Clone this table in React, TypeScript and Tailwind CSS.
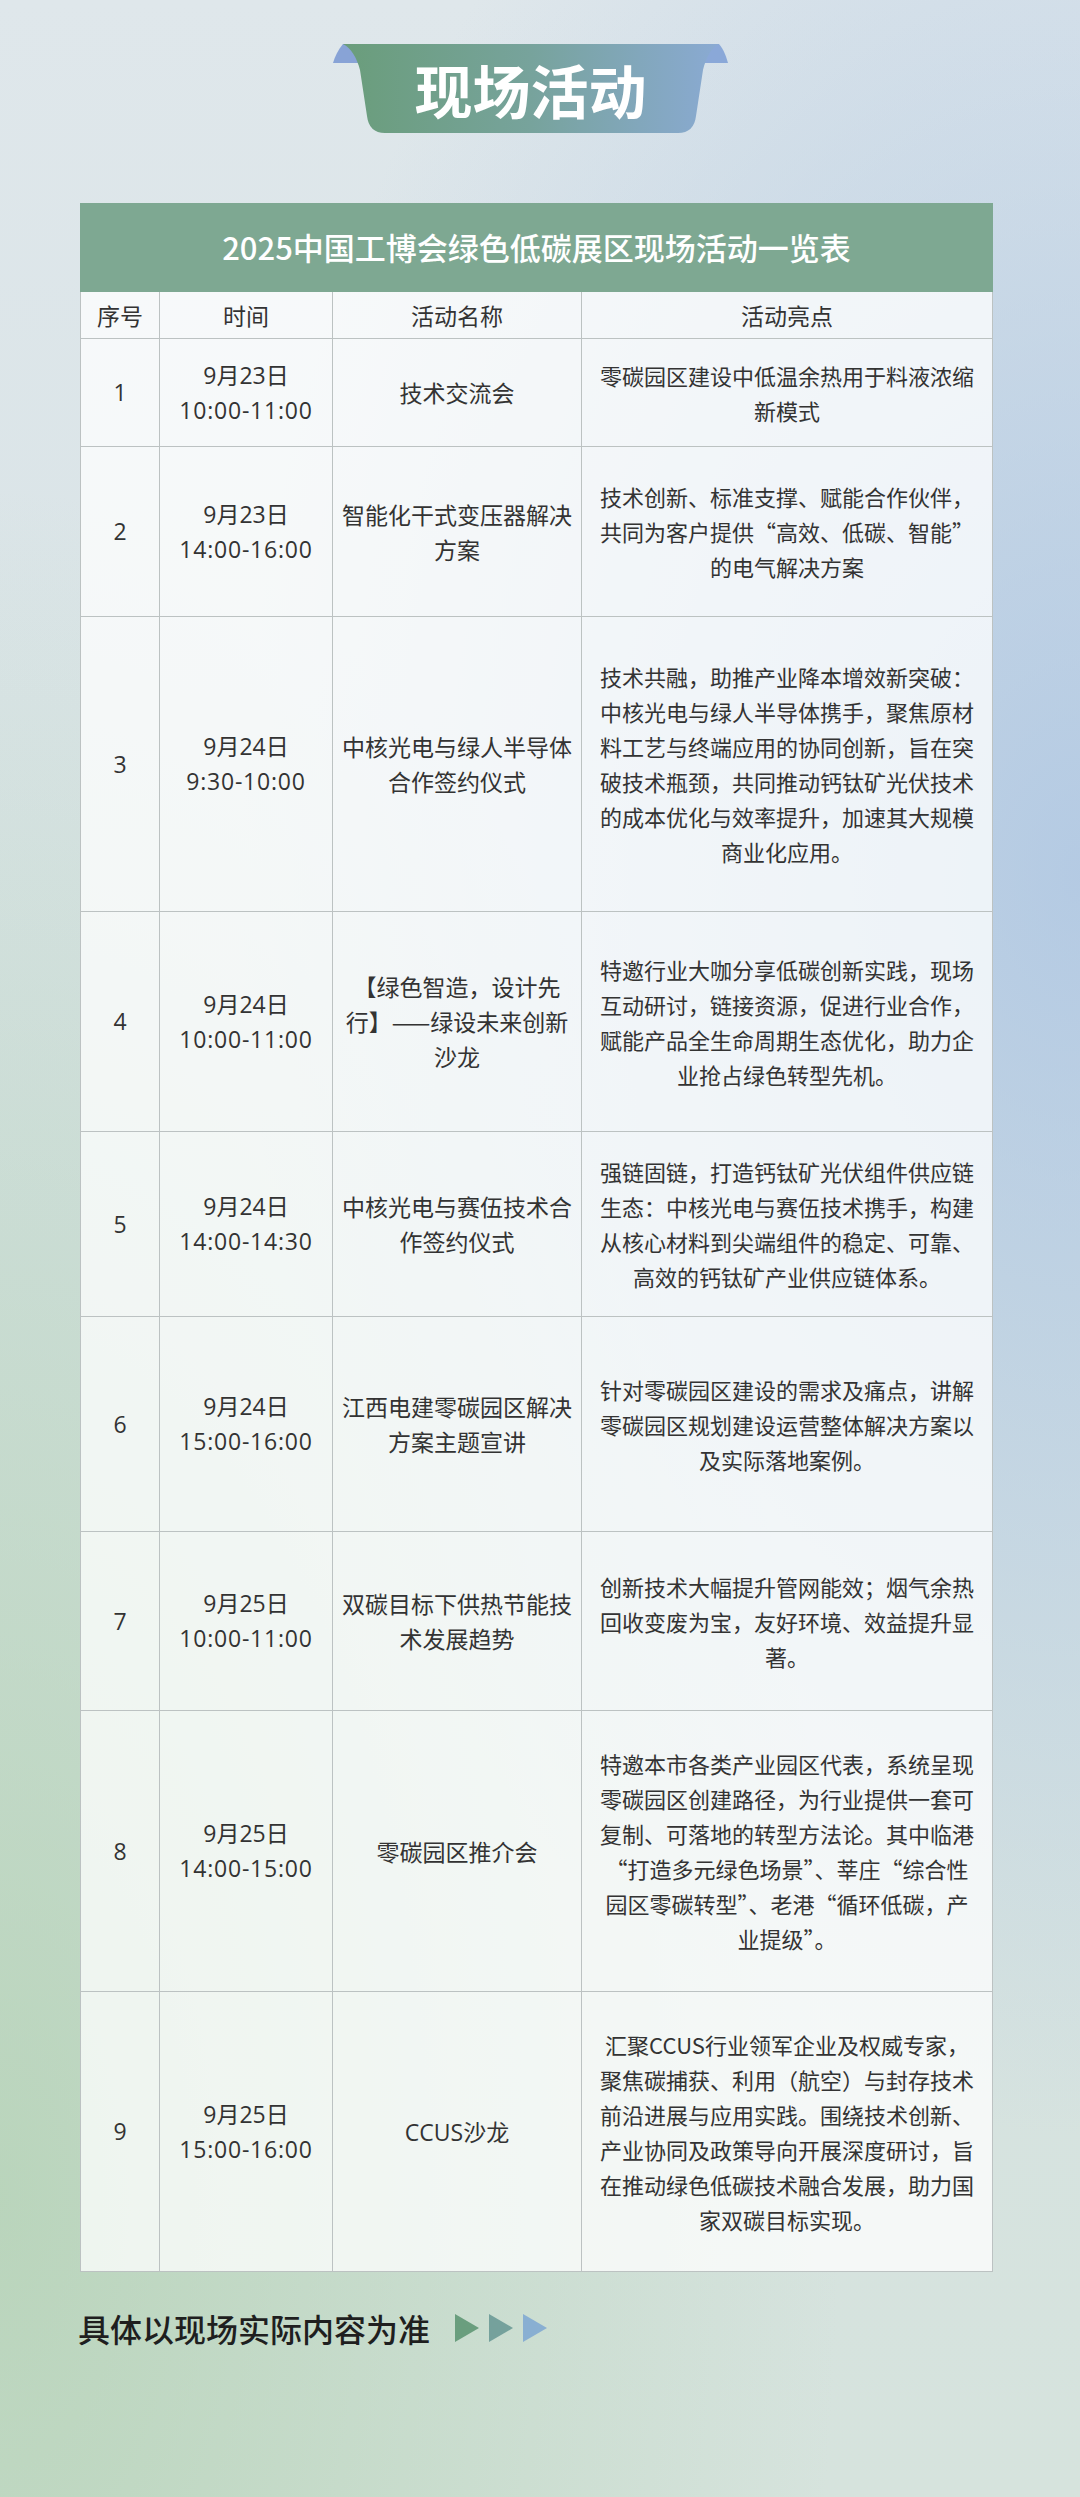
import React from "react";

type Row = {
  no: string;
  date: string;
  time: string;
  name: string[];
  points: string[];
  h: string;
};

const rows: Row[] = [
  {
    no: "1",
    date: "9月23日",
    time: "10:00-11:00",
    name: ["技术交流会"],
    points: ["零碳园区建设中低温余热用于料液浓缩", "新模式"],
    h: "h-[108px]",
  },
  {
    no: "2",
    date: "9月23日",
    time: "14:00-16:00",
    name: ["智能化干式变压器解决", "方案"],
    points: [
      "技术创新、标准支撑、赋能合作伙伴，",
      "共同为客户提供“高效、低碳、智能”",
      "的电气解决方案",
    ],
    h: "h-[170px]",
  },
  {
    no: "3",
    date: "9月24日",
    time: "9:30-10:00",
    name: ["中核光电与绿人半导体", "合作签约仪式"],
    points: [
      "技术共融，助推产业降本增效新突破：",
      "中核光电与绿人半导体携手，聚焦原材",
      "料工艺与终端应用的协同创新，旨在突",
      "破技术瓶颈，共同推动钙钛矿光伏技术",
      "的成本优化与效率提升，加速其大规模",
      "商业化应用。",
    ],
    h: "h-[295px]",
  },
  {
    no: "4",
    date: "9月24日",
    time: "10:00-11:00",
    name: ["【绿色智造，设计先", "行】——绿设未来创新", "沙龙"],
    points: [
      "特邀行业大咖分享低碳创新实践，现场",
      "互动研讨，链接资源，促进行业合作，",
      "赋能产品全生命周期生态优化，助力企",
      "业抢占绿色转型先机。",
    ],
    h: "h-[220px]",
  },
  {
    no: "5",
    date: "9月24日",
    time: "14:00-14:30",
    name: ["中核光电与赛伍技术合", "作签约仪式"],
    points: [
      "强链固链，打造钙钛矿光伏组件供应链",
      "生态：中核光电与赛伍技术携手，构建",
      "从核心材料到尖端组件的稳定、可靠、",
      "高效的钙钛矿产业供应链体系。",
    ],
    h: "h-[185px]",
  },
  {
    no: "6",
    date: "9月24日",
    time: "15:00-16:00",
    name: ["江西电建零碳园区解决", "方案主题宣讲"],
    points: [
      "针对零碳园区建设的需求及痛点，讲解",
      "零碳园区规划建设运营整体解决方案以",
      "及实际落地案例。",
    ],
    h: "h-[215px]",
  },
  {
    no: "7",
    date: "9月25日",
    time: "10:00-11:00",
    name: ["双碳目标下供热节能技", "术发展趋势"],
    points: [
      "创新技术大幅提升管网能效；烟气余热",
      "回收变废为宝，友好环境、效益提升显",
      "著。",
    ],
    h: "h-[179px]",
  },
  {
    no: "8",
    date: "9月25日",
    time: "14:00-15:00",
    name: ["零碳园区推介会"],
    points: [
      "特邀本市各类产业园区代表，系统呈现",
      "零碳园区创建路径，为行业提供一套可",
      "复制、可落地的转型方法论。其中临港",
      "“打造多元绿色场景”、莘庄“综合性",
      "园区零碳转型”、老港“循环低碳，产",
      "业提级”。",
    ],
    h: "h-[281px]",
  },
  {
    no: "9",
    date: "9月25日",
    time: "15:00-16:00",
    name: ["CCUS沙龙"],
    points: [
      "汇聚CCUS行业领军企业及权威专家，",
      "聚焦碳捕获、利用（航空）与封存技术",
      "前沿进展与应用实践。围绕技术创新、",
      "产业协同及政策导向开展深度研讨，旨",
      "在推动绿色低碳技术融合发展，助力国",
      "家双碳目标实现。",
    ],
    h: "h-[280px]",
  },
];

const cols = "grid grid-cols-[78px_173px_249px_411px]";
const cell = "flex flex-col items-center justify-center text-center";
const latin = "font-['Open_Sans','Noto_Sans_CJK_SC',sans-serif]";

const Banner = () => (
  <div className="relative ml-[333px] flex h-[89px] w-[395px] items-center justify-center">
    <svg
      className="absolute inset-0"
      width="395"
      height="89"
      viewBox="0 0 395 89"
    >
      <defs>
        <linearGradient id="bannerFill" x1="0" y1="0" x2="1" y2="0">
          <stop offset="0" stopColor="#6a9d7b" />
          <stop offset="0.5" stopColor="#77a39c" />
          <stop offset="1" stopColor="#8aaad3" />
        </linearGradient>
      </defs>
      <path d="M10 0 C5 6 2 12 0 19 L28 19 L28 0 Z" fill="#88a3d6" />
      <path d="M386 0 C391 6 393 12 395 19 L367 19 L367 0 Z" fill="#8aa8d8" />
      <path
        d="M10 0 L386 0 C378 4 373 14 370 26 L363 72 Q361 89 345 89 L52 89 Q36 89 34 72 L27 26 C24 14 18 4 10 0 Z"
        fill="url(#bannerFill)"
      />
    </svg>
    <span className="relative text-[58px] font-bold leading-none text-white">
      现场活动
    </span>
  </div>
);

const Arrow = ({ color }: { color: string }) => (
  <svg width="24" height="28" viewBox="0 0 24 28">
    <polygon points="0,0 24,14 0,28" fill={color} />
  </svg>
);

export default function App() {
  return (
    <div className="relative h-[2497px] w-[1080px] overflow-hidden bg-[radial-gradient(ellipse_at_100%_35%,rgba(168,194,226,0.75),transparent_55%),radial-gradient(ellipse_at_0%_88%,rgba(176,208,176,0.75),transparent_55%),linear-gradient(180deg,#dfe7eb,#d6e2e4_50%,#d6e3dd)] font-['Noto_Sans_CJK_SC','Noto_Sans',sans-serif] text-[#333]">
      <div className="pt-[44px]">
        <Banner />
      </div>

      <div className="ml-[80px] mt-[70px] w-[913px]">
        <div className="flex h-[89px] items-center justify-center bg-[#7ea892] text-[31px] font-medium text-white">
          2025中国工博会绿色低碳展区现场活动一览表
        </div>

        <div className="border-x border-b border-[#bcc2c2] bg-white/75">
          <div className={`${cols} h-[46px] text-[23px]`}>
            <div className={cell}>序号</div>
            <div className={`${cell} border-l border-[#bcc2c2]`}>时间</div>
            <div className={`${cell} border-l border-[#bcc2c2]`}>活动名称</div>
            <div className={`${cell} border-l border-[#bcc2c2]`}>活动亮点</div>
          </div>

          {rows.map((r) => (
            <div
              key={r.no}
              className={`${cols} ${r.h} border-t border-[#bcc2c2] leading-[35px]`}
            >
              <div className={`${cell} ${latin} text-[23px]`}>{r.no}</div>
              <div
                className={`${cell} ${latin} border-l border-[#bcc2c2] text-[23px]`}
              >
                <span>{r.date}</span>
                <span className="tracking-[0.8px]">{r.time}</span>
              </div>
              <div className={`${cell} border-l border-[#bcc2c2] text-[23px]`}>
                {r.name.map((l) => (
                  <span key={l} className="whitespace-nowrap">
                    {l.startsWith("CCUS") ? (
                      <>
                        <span className={latin}>CCUS</span>
                        {l.slice(4)}
                      </>
                    ) : (
                      l
                    )}
                  </span>
                ))}
              </div>
              <div className={`${cell} border-l border-[#bcc2c2] text-[22px]`}>
                {r.points.map((l) => (
                  <span key={l} className="whitespace-nowrap">
                    {l}
                  </span>
                ))}
              </div>
            </div>
          ))}
        </div>
      </div>

      <div className="ml-[78px] mt-[40px] flex h-[32px] items-center gap-[25px]">
        <span className="text-[32px] font-medium leading-none text-[#1f1f1f]">
          具体以现场实际内容为准
        </span>
        <div className="flex items-center gap-[10px]">
          <Arrow color="#6a9e7e" />
          <Arrow color="#75a19c" />
          <Arrow color="#89afd2" />
        </div>
      </div>
    </div>
  );
}
